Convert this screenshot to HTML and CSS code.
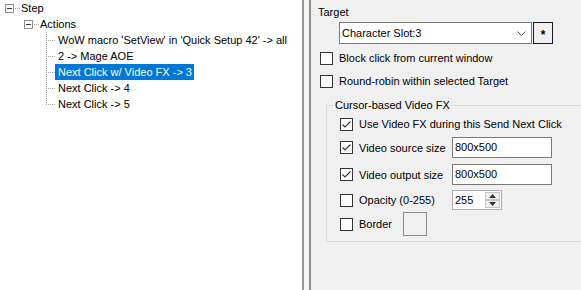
FILE: index.html
```html
<!DOCTYPE html>
<html>

<head>
	<title>Send Next Click - Step</title>
	<link rel="stylesheet" href="styles.css">
</head>

<body>
	<!-- left side: the step tree -->
	<div class="tree">
		<div class="row root">
			<span class="expander"></span>
			<span class="dots"></span>
			<span class="label">Step</span>
		</div>
		<div class="row level1">
			<span class="expander"></span>
			<span class="dots"></span>
			<span class="label">Actions</span>
		</div>
		<div class="children">
			<div class="row child">
				<span class="branch"></span>
				<span class="label">WoW macro 'SetView' in 'Quick Setup 42' -&gt; all</span>
			</div>
			<div class="row child">
				<span class="branch"></span>
				<span class="label">2 -&gt; Mage AOE</span>
			</div>
			<div class="row child">
				<span class="branch"></span>
				<span class="label selected">Next Click w/ Video FX -&gt; 3</span>
			</div>
			<div class="row child">
				<span class="branch"></span>
				<span class="label">Next Click -&gt; 4</span>
			</div>
			<div class="row child">
				<span class="branch last"></span>
				<span class="label">Next Click -&gt; 5</span>
			</div>
		</div>
	</div>

	<div class="splitter"></div>

	<!-- right side: properties of the selected action -->
	<div class="panel">
		<div class="caption">Target</div>
		<div class="target-row">
			<div class="combo">
				<span>Character Slot:3</span>
				<svg class="chevron" width="9" height="5" viewBox="0 0 9 5">
					<polyline points="0.5,0.5 4.5,4.5 8.5,0.5" fill="none" stroke="#606060" stroke-width="1"/>
				</svg>
			</div>
			<div class="star-button">*</div>
		</div>

		<div class="check first">
			<span class="box"></span>
			<span>Block click from current window</span>
		</div>
		<div class="check second">
			<span class="box"></span>
			<span>Round-robin within selected Target</span>
		</div>

		<fieldset class="group">
			<legend>Cursor-based Video FX</legend>

			<div class="check fx-use">
				<span class="box checked"><svg width="11" height="11" viewBox="0 0 11 11"><polyline points="1.5,5.5 4,8 9.5,2.5" fill="none" stroke="#333" stroke-width="1.1"/></svg></span>
				<span>Use Video FX during this Send Next Click</span>
			</div>
			<div class="check fx-row">
				<span class="box checked"><svg width="11" height="11" viewBox="0 0 11 11"><polyline points="1.5,5.5 4,8 9.5,2.5" fill="none" stroke="#333" stroke-width="1.1"/></svg></span>
				<span class="field-label">Video source size</span>
				<div class="textbox">800x500</div>
			</div>
			<div class="check fx-row">
				<span class="box checked"><svg width="11" height="11" viewBox="0 0 11 11"><polyline points="1.5,5.5 4,8 9.5,2.5" fill="none" stroke="#333" stroke-width="1.1"/></svg></span>
				<span class="field-label">Video output size</span>
				<div class="textbox">800x500</div>
			</div>
			<div class="check fx-opacity">
				<span class="box"></span>
				<span class="field-label">Opacity (0-255)</span>
				<div class="numeric">
					<span class="value">255</span>
					<div class="spin">
						<div class="spin-btn"><svg width="7" height="4" viewBox="0 0 7 4"><polygon points="0,4 3.5,0 7,4" fill="#333"/></svg></div>
						<div class="spin-btn"><svg width="7" height="4" viewBox="0 0 7 4"><polygon points="0,0 3.5,4 7,0" fill="#333"/></svg></div>
					</div>
				</div>
			</div>
			<div class="check fx-border">
				<span class="box"></span>
				<span class="border-label">Border</span>
				<div class="color-button"></div>
			</div>
		</fieldset>
	</div>
</body>

</html>
```

FILE: styles.css
```css
body {
	margin: 0;
	padding: 0;
	height: 290px;
	display: flex;
	overflow: hidden;
	font-family: "Liberation Sans", Arial, sans-serif;
	font-size: 11px;
	color: #000;
	background-color: #fff;
}

/* tree on the left */
.tree {
	width: 302px;
	flex-shrink: 0;
	background-color: #fff;
}

.row {
	display: flex;
	align-items: center;
	height: 16px;
	line-height: 16px;
	white-space: nowrap;
}

.root {
	padding-left: 5px;
}

.level1 {
	padding-left: 24px;
}

.expander {
	width: 7px;
	height: 7px;
	border: 1px solid #8e8f8f;
	background: linear-gradient(#333, #333) no-repeat center / 5px 1px, #fff;
}

.dots {
	width: 5px;
	height: 1px;
	margin-left: 1px;
	background: repeating-linear-gradient(to right, #a0a0a0 0 1px, transparent 1px 2px);
}

.root .label {
	margin-left: 1px;
}

.level1 .label {
	margin-left: 1px;
}

.children {
	padding-left: 46px;
}

.branch {
	width: 9px;
	height: 16px;
	/* vertical line + horizontal stub */
	background:
		repeating-linear-gradient(to bottom, #a0a0a0 0 1px, transparent 1px 2px) no-repeat 0 0 / 1px 16px,
		repeating-linear-gradient(to right, #a0a0a0 0 1px, transparent 1px 2px) no-repeat 0 8px / 9px 1px;
}

.branch.last {
	background:
		repeating-linear-gradient(to bottom, #a0a0a0 0 1px, transparent 1px 2px) no-repeat 0 0 / 1px 9px,
		repeating-linear-gradient(to right, #a0a0a0 0 1px, transparent 1px 2px) no-repeat 0 8px / 9px 1px;
}

.child .label {
	padding: 0 2px 0 3px;
}

.label.selected {
	background-color: #0078d7;
	color: #fff;
}

.splitter {
	width: 5px;
	flex-shrink: 0;
	border-left: 2px solid #999;
	border-right: 2px solid #8d8d8d;
	background-color: #f4f4f4;
}

/* property panel */
.panel {
	flex: 1;
	background-color: #f0f0f0;
	padding: 4px 0 0 7px;
	overflow: hidden;
	white-space: nowrap;
}

.caption {
	line-height: 16px;
}

.target-row {
	display: flex;
	gap: 1px;
	margin: 2px 0 0 21px;
}

.combo {
	width: 189px;
	height: 20px;
	border: 1px solid #7a7a7a;
	background-color: #fff;
	display: flex;
	align-items: center;
	justify-content: space-between;
	padding-left: 2px;
	box-sizing: content-box;
}

.chevron {
	margin-right: 5px;
}

.star-button {
	width: 18px;
	height: 20px;
	border: 1px solid #1a1a1a;
	background-color: #f0f0f0;
	text-align: center;
	line-height: 24px;
	font-weight: bold;
	font-size: 12px;
}

.check {
	display: flex;
	align-items: center;
	height: 16px;
}

.box {
	width: 11px;
	height: 11px;
	border: 1px solid #333;
	background-color: #fff;
	margin-right: 6px;
	flex-shrink: 0;
	display: flex;
}

.first {
	margin: 6px 0 0 2px;
}

.second {
	margin: 7px 0 0 2px;
}

/* group box */
.group {
	margin: 9px 0 0 8px;
	padding: 0 0 5px 13px;
	border: 1px solid #dcdcdc;
	width: 400px;
}

.group legend {
	padding: 0 1px;
	margin-left: -6px;
	line-height: 14px;
}

.fx-use {
	margin-top: 4px;
}

.fx-row {
	height: 21px;
	margin-top: 5px;
}

.fx-row + .fx-row {
	margin-top: 6px;
}

.field-label {
	width: 93px;
}

.textbox {
	width: 96px;
	height: 19px;
	line-height: 19px;
	border: 1px solid #7a7a7a;
	background-color: #fff;
	padding-left: 2px;
}

.fx-opacity {
	height: 20px;
	margin-top: 5px;
}

.numeric {
	width: 48px;
	height: 18px;
	border: 1px solid #abadb3;
	background-color: #fff;
	display: flex;
	justify-content: space-between;
}

.numeric .value {
	padding-left: 2px;
	line-height: 18px;
}

.spin {
	width: 15px;
	display: flex;
	flex-direction: column;
	margin: 1px 1px 1px 0;
}

.spin-btn {
	flex: 1;
	border: 1px solid #c6c6c6;
	background-color: #f0f0f0;
	display: flex;
	align-items: center;
	justify-content: center;
}

.fx-border {
	height: 24px;
	margin-top: 2px;
}

.border-label {
	width: 44px;
}

.color-button {
	width: 22px;
	height: 22px;
	border: 1px solid #8a8a8a;
	background-color: #f0f0f0;
}
```
